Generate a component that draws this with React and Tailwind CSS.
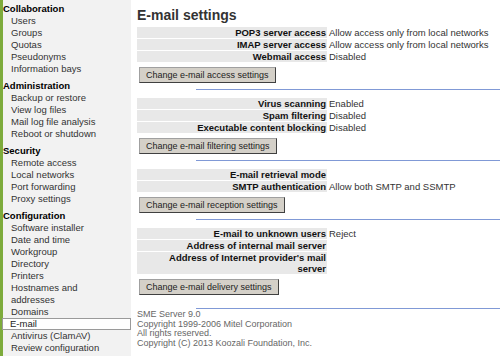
import React from 'react';

const menu = [
  { title: 'Collaboration', items: ['Users', 'Groups', 'Quotas', 'Pseudonyms', 'Information bays'] },
  { title: 'Administration', items: ['Backup or restore', 'View log files', 'Mail log file analysis', 'Reboot or shutdown'] },
  { title: 'Security', items: ['Remote access', 'Local networks', 'Port forwarding', 'Proxy settings'] },
  {
    title: 'Configuration',
    items: ['Software installer', 'Date and time', 'Workgroup', 'Directory', 'Printers', 'Hostnames and|addresses', 'Domains', 'E-mail', 'Antivirus (ClamAV)', 'Review configuration'],
  },
];

const sections = [
  {
    rows: [
      ['POP3 server access', 'Allow access only from local networks'],
      ['IMAP server access', 'Allow access only from local networks'],
      ['Webmail access', 'Disabled'],
    ],
    button: 'Change e-mail access settings',
  },
  {
    rows: [
      ['Virus scanning', 'Enabled'],
      ['Spam filtering', 'Disabled'],
      ['Executable content blocking', 'Disabled'],
    ],
    button: 'Change e-mail filtering settings',
  },
  {
    rows: [
      ['E-mail retrieval mode', ''],
      ['SMTP authentication', 'Allow both SMTP and SSMTP'],
    ],
    button: 'Change e-mail reception settings',
  },
  {
    rows: [
      ['E-mail to unknown users', 'Reject'],
      ['Address of internal mail server', ''],
      ["Address of Internet provider's mail server", ''],
    ],
    button: 'Change e-mail delivery settings',
  },
];

const Sidebar = () => (
  <div className="w-[131px] shrink-0 bg-[#f2f2f2] border-l-[3px] border-[#7dab3c] pt-[3px] text-[9.5px] leading-[12px]">
    {menu.map((group, gi) => (
      <div key={group.title} className={gi > 0 ? 'mt-[5px]' : ''}>
        <div className="pl-[0px] font-bold text-black">{group.title}</div>
        {group.items.map((item) => {
          const lines = item.split('|');
          const active = item === 'E-mail';
          return (
            <div
              key={item}
              className={
                active
                  ? 'pl-[7px] bg-white border border-[#9a9a9a] -ml-[1px] h-[12px] leading-[10px] text-[#222]'
                  : 'pl-[8px] text-[#333]'
              }
            >
              {lines.map((l, i) => (
                <React.Fragment key={i}>
                  {i > 0 && <br />}
                  {l}
                </React.Fragment>
              ))}
            </div>
          );
        })}
      </div>
    ))}
  </div>
);

const Section = ({ rows, button, last }) => (
  <div>
    <div className="flex flex-col gap-[1px]">
      {rows.map(([label, value]) => (
        <div key={label} className="flex leading-[11px]">
          <div className="w-[190px] shrink-0 bg-[#e8e8e8] text-right font-bold text-[#111] pr-[1px] pl-[4px]">{label}</div>
          <div className="pl-[2px] text-[#333]">{value}</div>
        </div>
      ))}
    </div>
    <button className="mt-[5px] ml-[2px] h-[16px] px-[6px] bg-[#d4d0c8] border border-[#a0a0a0] border-r-[#404040] border-b-[#404040] text-[9px] leading-[14px] text-[#222]">
      {button}
    </button>
    <div className={`${last ? 'mt-[13px]' : 'mt-[6px] mb-[8px]'} ml-[59px] h-px bg-[#8099d6]`} />
  </div>
);

export default function App() {
  return (
    <div className="w-[500px] h-[356px] overflow-hidden flex bg-white font-['Liberation_Sans',Arial,sans-serif]">
      <Sidebar />
      <div className="flex-1 pl-[6px] text-[9.5px]">
        <h1 className="mt-[7px] h-[16px] text-[14px] leading-[16px] font-bold text-[#333]">E-mail settings</h1>
        <div className="mt-[4px]">
          {sections.map((s, i) => (
            <Section key={s.button} {...s} last={i === sections.length - 1} />
          ))}
        </div>
        <div className="text-[9px] leading-[9.5px] text-[#666] pt-[1px]">
          <div>SME Server 9.0</div>
          <div>Copyright 1999-2006 Mitel Corporation</div>
          <div>All rights reserved.</div>
          <div>Copyright (C) 2013 Koozali Foundation, Inc.</div>
        </div>
      </div>
    </div>
  );
}
